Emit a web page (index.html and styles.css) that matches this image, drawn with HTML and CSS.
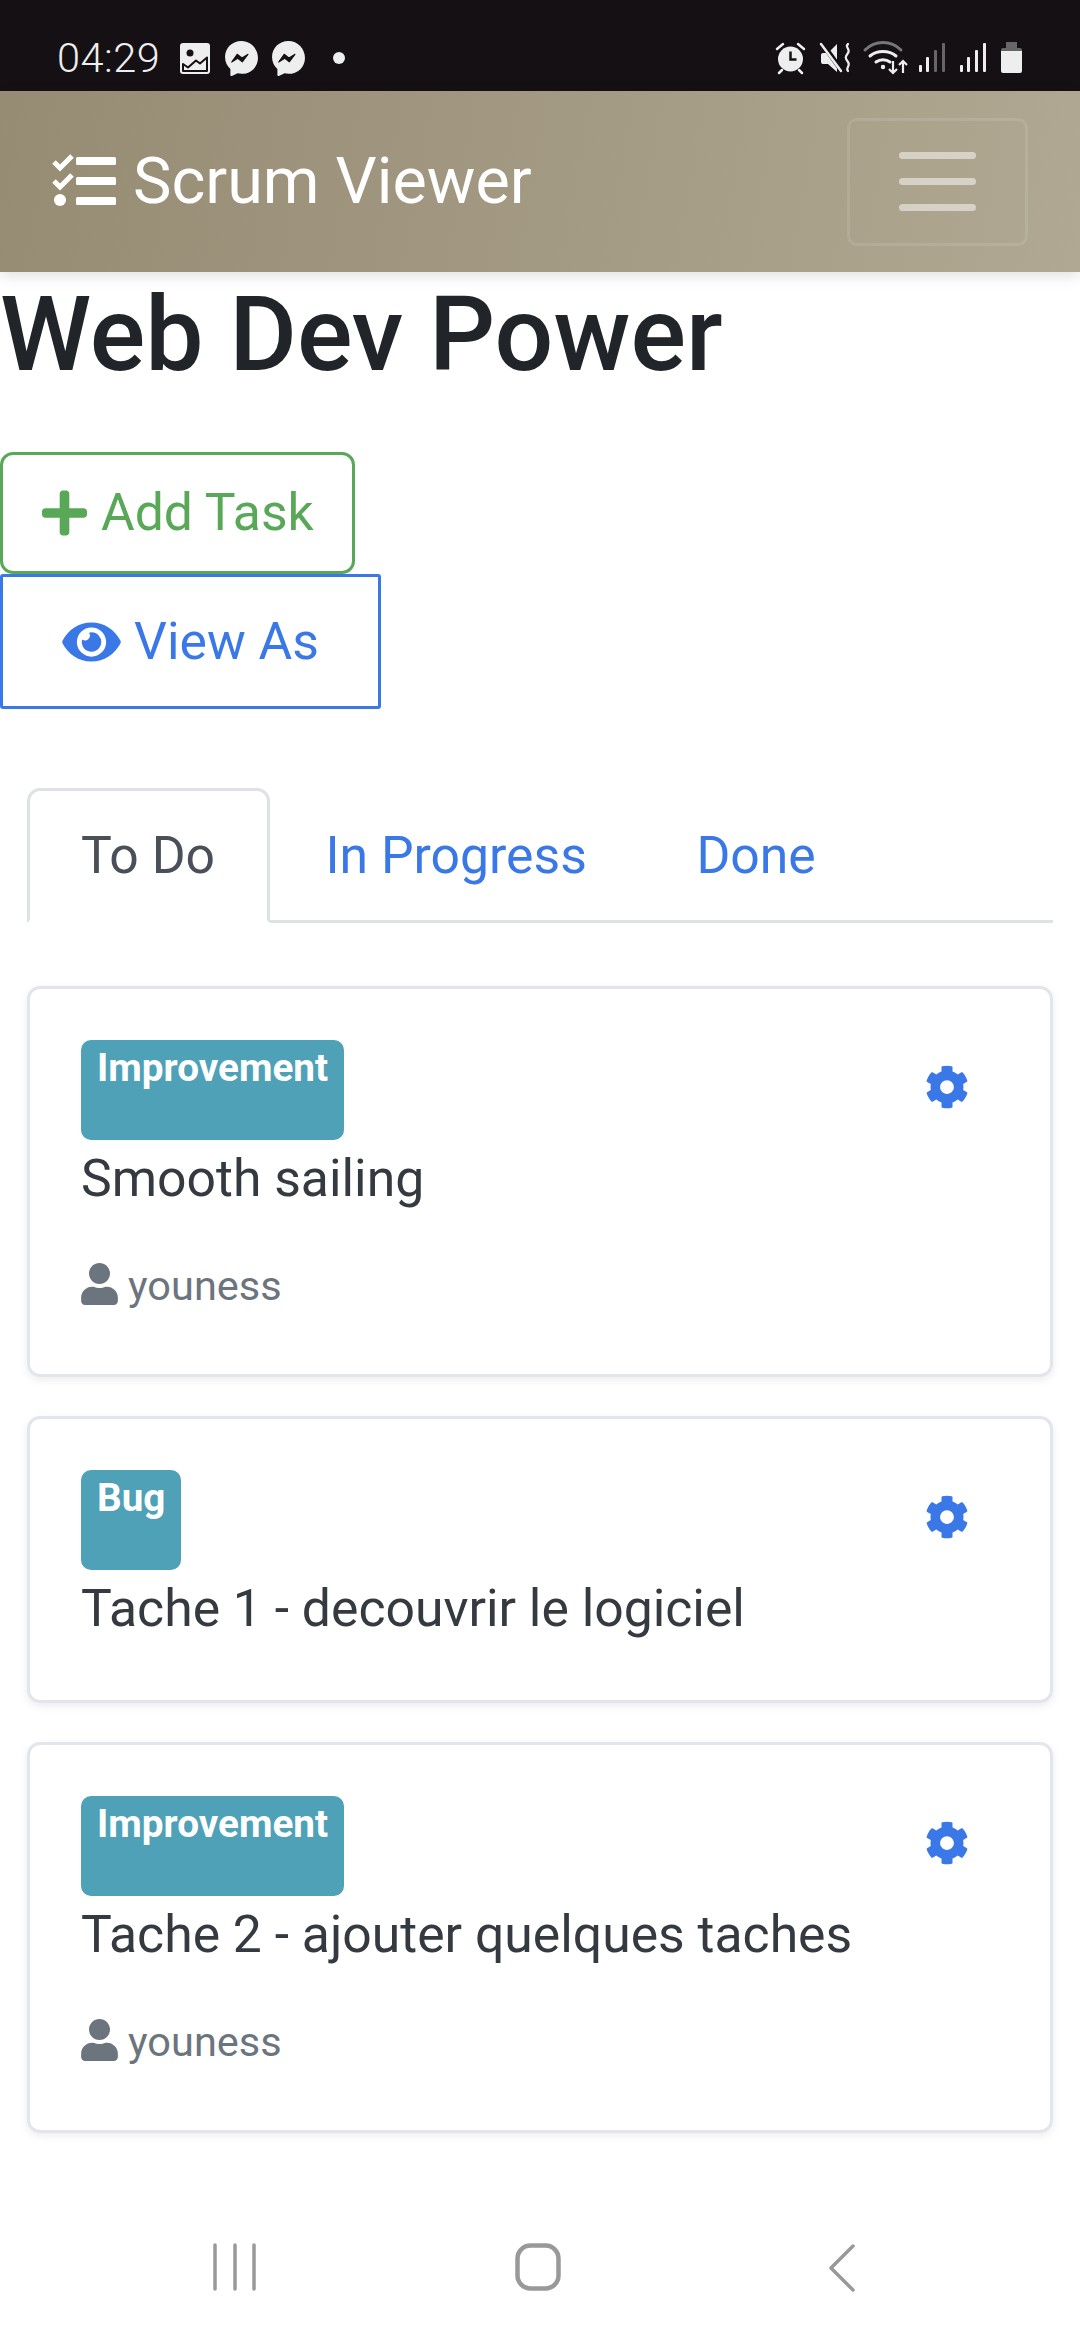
FILE: index.html
```html
<!DOCTYPE html>
<html lang="en">
<head>
    <meta charset="UTF-8">
    <meta name="viewport" content="width=device-width, initial-scale=1.0">
    <title>Scrum Viewer</title>
    <link rel="stylesheet" href="styles.css">
</head>
<body>
    <svg class="sprites" width="0" height="0">
        <symbol id="cog" viewBox="0 0 512 512"><path d="M487.4 315.7l-42.6-24.6c4.3-23.2 4.3-47 0-70.2l42.6-24.6c4.9-2.8 7.1-8.6 5.5-14-11.1-35.6-30-67.8-54.7-94.6-3.8-4.1-10-5.1-14.8-2.3L380.8 110c-17.9-15.4-38.5-27.3-60.8-35.1V25.8c0-5.6-3.9-10.5-9.4-11.7-36.7-8.2-74.3-7.8-109.2 0-5.5 1.2-9.4 6.1-9.4 11.7V75c-22.2 7.9-42.8 19.8-60.8 35.1L88.7 85.5c-4.9-2.8-11-1.9-14.8 2.3-24.7 26.7-43.6 58.9-54.7 94.6-1.7 5.4.6 11.2 5.5 14L67.3 221c-4.3 23.2-4.3 47 0 70.2l-42.6 24.6c-4.9 2.8-7.1 8.6-5.5 14 11.1 35.6 30 67.8 54.7 94.6 3.8 4.1 10 5.1 14.8 2.3l42.6-24.6c17.9 15.4 38.5 27.3 60.8 35.1v49.2c0 5.6 3.9 10.5 9.4 11.7 36.7 8.2 74.3 7.8 109.2 0 5.5-1.2 9.4-6.1 9.4-11.7v-49.2c22.2-7.9 42.8-19.8 60.8-35.1l42.6 24.6c4.9 2.8 11 1.9 14.8-2.3 24.7-26.7 43.6-58.9 54.7-94.6 1.5-5.5-.7-11.3-5.6-14.1zM256 336c-44.1 0-80-35.9-80-80s35.9-80 80-80 80 35.9 80 80-35.9 80-80 80z"/></symbol>
        <symbol id="user" viewBox="0 0 448 512"><path d="M224 256c70.7 0 128-57.3 128-128S294.7 0 224 0 96 57.3 96 128s57.3 128 128 128zm89.6 32h-16.7c-22.2 10.2-46.9 16-72.9 16s-50.6-5.8-72.9-16h-16.7C60.2 288 0 348.2 0 422.4V464c0 26.5 21.5 48 48 48h352c26.5 0 48-21.5 48-48v-41.6c0-74.2-60.2-134.4-134.4-134.4z"/></symbol>
        <symbol id="messenger" viewBox="0 0 32 34"><path d="M16 0C7 0 0 6.700 0 15.500c0 4.700 2 8.800 5.200 11.600v5.900c0 .8.800 1.300 1.500 1l5.500-2.600c1.200.3 2.500.5 3.800.5 9 0 16-6.700 16-15.500S25 0 16 0z" fill="#eee"/><path d="M6.500 20.500l5.300-7.600 4.600 3.600 6-3.600-5.600 7.400-4.500-3.500z" fill="#151013" stroke="#151013" stroke-linejoin="round"/></symbol>
    </svg>

    <div class="statusbar">
        <div class="status-left">
            <span class="time">04:29</span>
            <svg class="st-gallery" viewBox="0 0 30 31">
                <rect width="30" height="31" rx="3" fill="#eee"/>
                <circle cx="10" cy="10" r="3.500" fill="#151013"/>
                <path d="M3 28v-7l5 3.500 8-7 4 3 7-6V28z" fill="none" stroke="#151013" stroke-width="2" stroke-linejoin="round"/>
            </svg>
            <svg class="st-msg"><use href="#messenger"/></svg>
            <svg class="st-msg st-msg2"><use href="#messenger"/></svg>
            <span class="st-dot"></span>
        </div>
        <svg class="status-right" viewBox="0 0 248 34" fill="#eee">
            <!-- alarm -->
            <circle cx="15.500" cy="18" r="12.500"/>
            <path d="M2 8l6-5M29 8l-6-5M7 29l-3 3M24 29l3 3" stroke="#eee" stroke-width="2.500" stroke-linecap="round" fill="none"/>
            <path d="M15.500 10.500v8h6" stroke="#151013" stroke-width="2.500" fill="none"/>
            <!-- mute vibrate -->
            <path d="M48 12h5l9-9v28l-9-8h-5a2 2 0 0 1-2-2v-7a2 2 0 0 1 2-2z"/>
            <path d="M47 2l20 28" stroke="#151013" stroke-width="5"/>
            <path d="M46 3l20 27" stroke="#eee" stroke-width="2.500" stroke-linecap="round"/>
            <path d="M73 3c-4 3 3 5 0 9s-3 5 0 9-3 6 0 9" stroke="#eee" stroke-width="2.200" fill="none" stroke-linecap="round"/>
            <!-- wifi -->
            <path d="M90 9c10-10 26-10 36 0" stroke="#777" stroke-width="3" fill="none" stroke-linecap="round"/>
            <path d="M95 15c7-6 19-6 26 0" stroke="#eee" stroke-width="3" fill="none" stroke-linecap="round"/>
            <path d="M101 21c4-3 10-3 14 0" stroke="#eee" stroke-width="3" fill="none" stroke-linecap="round"/>
            <circle cx="108" cy="26" r="2.200"/>
            <path d="M118 20v12M114 28l4 4 4-4M128 32V20M124 24l4-4 4 4" stroke="#eee" stroke-width="2.200" fill="none"/>
            <!-- signal 1 -->
            <rect x="144" y="24" width="3" height="7" rx="1"/>
            <rect x="151" y="16" width="3" height="15" rx="1"/>
            <rect x="159" y="9" width="3" height="22" rx="1" fill="#666"/>
            <rect x="167" y="2" width="3" height="29" rx="1" fill="#666"/>
            <!-- signal 2 -->
            <rect x="185" y="24" width="3" height="7" rx="1"/>
            <rect x="192" y="16" width="3" height="15" rx="1"/>
            <rect x="200" y="9" width="3" height="22" rx="1"/>
            <rect x="208" y="2" width="3" height="29" rx="1"/>
            <!-- battery -->
            <path d="M226 9a2 2 0 0 1 2-2h3V1h11v6h3a2 2 0 0 1 2 2v1h-21z" fill="#666"/>
            <path d="M226 10h21v20a2 2 0 0 1-2 2h-17a2 2 0 0 1-2-2z"/>
        </svg>
    </div>

    <nav class="navbar">
        <a class="brand">
            <svg class="brand-icon" viewBox="0 0 64 56">
                <path d="M2 9l6 6 12-12M2 28l6 6 12-12" fill="none" stroke="#fff" stroke-width="5"/>
                <circle cx="8" cy="47" r="6" fill="#fff"/>
                <rect x="24" y="4" width="40" height="8" rx="1.500" fill="#fff"/>
                <rect x="24" y="24" width="40" height="8" rx="1.500" fill="#fff"/>
                <rect x="24" y="44" width="40" height="8" rx="1.500" fill="#fff"/>
            </svg>
            Scrum Viewer
        </a>
        <button class="toggler"><span></span><span></span><span></span></button>
    </nav>

    <main class="page">
        <h1>Web Dev Power</h1>
        <div class="actions">
            <button class="btn btn-add">
                <svg class="ico ico-plus" viewBox="0 0 448 512"><path d="M416 208H272V64c0-17.670-14.330-32-32-32h-32c-17.670 0-32 14.330-32 32v144H32c-17.670 0-32 14.330-32 32v32c0 17.670 14.330 32 32 32h144v144c0 17.670 14.330 32 32 32h32c17.670 0 32-14.330 32-32V304h144c17.670 0 32-14.330 32-32v-32c0-17.670-14.330-32-32-32z"/></svg>
                Add Task
            </button>
            <button class="btn btn-view">
                <svg class="ico ico-eye" viewBox="0 0 576 512"><path d="M572.520 241.400C518.290 135.590 410.930 64 288 64S57.680 135.640 3.480 241.410a32.350 32.350 0 0 0 0 29.190C57.710 376.410 165.070 448 288 448s230.320-71.640 284.520-177.410a32.350 32.350 0 0 0 0-29.190zM288 400a144 144 0 1 1 144-144 143.930 143.930 0 0 1-144 144zm0-240a95.310 95.310 0 0 0-25.310 3.790 47.850 47.850 0 0 1-66.900 66.900A95.780 95.780 0 1 0 288 160z"/></svg>
                View As
            </button>
        </div>

        <div class="board">
            <ul class="tabs">
                <li class="tab active">To Do</li>
                <li class="tab">In Progress</li>
                <li class="tab">Done</li>
            </ul>

            <div class="card">
                <div class="card-text">
                    <span class="badge">Improvement</span>
                    <div class="card-title">Smooth sailing</div>
                    <div class="assignee"><svg class="ico-user"><use href="#user"/></svg>youness</div>
                </div>
                <svg class="gear"><use href="#cog"/></svg>
            </div>

            <div class="card">
                <div class="card-text">
                    <span class="badge">Bug</span>
                    <div class="card-title">Tache 1 - decouvrir le logiciel</div>
                </div>
                <svg class="gear"><use href="#cog"/></svg>
            </div>

            <div class="card">
                <div class="card-text">
                    <span class="badge">Improvement</span>
                    <div class="card-title">Tache 2 - ajouter quelques taches</div>
                    <div class="assignee"><svg class="ico-user"><use href="#user"/></svg>youness</div>
                </div>
                <svg class="gear"><use href="#cog"/></svg>
            </div>
        </div>
    </main>

    <div class="softkeys">
        <svg class="key key-recent" viewBox="0 0 44 48"><path d="M2 2v44M22 2v44M41 2v44" stroke="#999" stroke-width="3.500" stroke-linecap="round" fill="none"/></svg>
        <svg class="key key-home" viewBox="0 0 46 48"><rect x="2.500" y="2.500" width="41" height="43" rx="13" stroke="#999" stroke-width="4.500" fill="none"/></svg>
        <svg class="key key-back" viewBox="0 0 28 50"><path d="M25 3L3 25l22 22" stroke="#999" stroke-width="3.500" stroke-linecap="round" stroke-linejoin="round" fill="none"/></svg>
    </div>
</body>
</html>
```

FILE: styles.css
```css
html, body {
    margin: 0;
    padding: 0;
}
body {
    width: 1080px;
    height: 2340px;
    display: flex;
    flex-direction: column;
    font-family: Roboto, "Noto Sans", sans-serif;
    font-size: 42px;
    line-height: 1.5;
    color: #212529;
    background: #fff;
    overflow: hidden;
}
.sprites {
    position: absolute;
}

/* status bar */
.statusbar {
    height: 91px;
    flex: none;
    background: #151013;
    display: flex;
    justify-content: space-between;
    align-items: flex-start;
    padding: 41px 57px 0 57px;
    box-sizing: border-box;
    color: #eee;
}
.status-left {
    display: flex;
    align-items: center;
    height: 34px;
}
.time {
    font-size: 41.5px;
    font-weight: 300;
    line-height: 34px;
    letter-spacing: 0.5px;
    width: 123px;
}
.st-gallery {
    width: 30px;
    height: 31px;
}
.st-msg {
    width: 33px;
    height: 35px;
    margin-left: 15px;
}
.st-msg2 {
    margin-left: 14px;
}
.st-dot {
    width: 12px;
    height: 12px;
    border-radius: 50%;
    background: #eee;
    margin-left: 28px;
}
.status-right {
    width: 248px;
    height: 34px;
}

/* navbar */
.navbar {
    height: 181px;
    flex: none;
    background: linear-gradient(100deg, #968b73 0%, #b0a892 100%);
    box-shadow: 0 4px 14px rgba(0, 0, 0, 0.12);
    display: flex;
    justify-content: space-between;
    align-items: center;
    padding: 0 52px;
    box-sizing: border-box;
    position: relative;
}
.brand {
    display: flex;
    align-items: center;
    gap: 17px;
    color: #fff;
    font-size: 64.7px;
    line-height: 1.5;
}
.brand-icon {
    width: 64px;
    height: 56px;
}
.toggler {
    width: 181px;
    height: 128px;
    background: none;
    border: 3px solid rgba(255, 255, 255, 0.1);
    border-radius: 10px;
    padding: 0;
    display: flex;
    flex-direction: column;
    align-items: center;
    justify-content: center;
    gap: 19px;
}
.toggler span {
    width: 77px;
    height: 7px;
    border-radius: 4px;
    background: rgba(255, 255, 255, 0.5);
}

/* heading + buttons */
.page {
    flex: 1;
}
h1 {
    margin: 0 0 54px;
    font-size: 103.7px;
    font-weight: 500;
    line-height: 126px;
}
.actions {
    display: flex;
    flex-direction: column;
    align-items: flex-start;
}
.btn {
    display: flex;
    align-items: center;
    font-family: inherit;
    font-size: 51.7px;
    line-height: 1.5;
    background: #fff;
    padding: 0;
    box-sizing: border-box;
}
.btn-add {
    width: 355px;
    height: 122px;
    color: #58a858;
    border: 3px solid #58a858;
    border-radius: 13px;
    padding-left: 39px;
    gap: 14px;
}
.btn-view {
    width: 381px;
    height: 135px;
    color: #3b78e7;
    border: 3px solid #3b78e7;
    border-radius: 3px;
    padding-left: 59px;
    gap: 13px;
}
.ico {
    fill: currentColor;
    flex: none;
}
.ico-plus {
    width: 45px;
    height: 52px;
}
.ico-eye {
    width: 59px;
    height: 52px;
}

/* tabs + cards */
.board {
    margin: 79px 27px 0;
}
.tabs {
    list-style: none;
    margin: 0;
    padding: 0;
    height: 135px;
    display: flex;
    border-bottom: 3px solid #dee2e6;
    box-sizing: border-box;
}
.tab {
    height: 135px;
    box-sizing: border-box;
    padding: 0 51px;
    display: flex;
    align-items: center;
    font-size: 51.7px;
    color: #3b78e7;
    border: 3px solid transparent;
}
.tab + .tab {
    margin-left: 1.5px;
}
.tab.active {
    color: #495057;
    background: #fff;
    border-color: #dee2e6 #dee2e6 #fff;
    border-radius: 13px 13px 0 0;
    padding-right: 52px;
}
.card {
    display: flex;
    justify-content: space-between;
    align-items: flex-start;
    border: 3px solid #e2e5ec;
    border-radius: 13px;
    box-shadow: 0 3px 8px rgba(0, 0, 0, 0.08);
    padding: 51px 81px 52px 51px;
    margin-bottom: 39px;
}
.tabs + .card {
    margin-top: 63px;
}
.badge {
    display: inline-block;
    background: #4ea1b7;
    color: #fff;
    font-size: 38.7px;
    font-weight: 700;
    line-height: 56px;
    height: 100px;
    padding: 0 16px;
    border-radius: 10px;
    box-sizing: border-box;
    vertical-align: top;
}
.card-title {
    font-size: 51.7px;
    line-height: 78px;
    color: #343a40;
}
.assignee {
    display: flex;
    align-items: center;
    gap: 10px;
    margin: 36px 0 5px;
    color: #6c757d;
    font-size: 41.5px;
    line-height: 63px;
}
.ico-user {
    width: 37px;
    height: 42px;
    fill: #6c757d;
    margin-bottom: 4px;
}
.gear {
    width: 44px;
    height: 44px;
    margin-top: 25px;
    fill: #3b78e7;
}

/* soft keys */
.softkeys {
    flex: none;
    height: 150px;
    box-sizing: border-box;
    padding: 53px 0 0 213px;
    display: flex;
    align-items: flex-start;
}
.key-recent {
    width: 44px;
    height: 48px;
}
.key-home {
    width: 46px;
    height: 48px;
    margin-left: 258px;
}
.key-back {
    width: 28px;
    height: 50px;
    margin-left: 267px;
}
```
